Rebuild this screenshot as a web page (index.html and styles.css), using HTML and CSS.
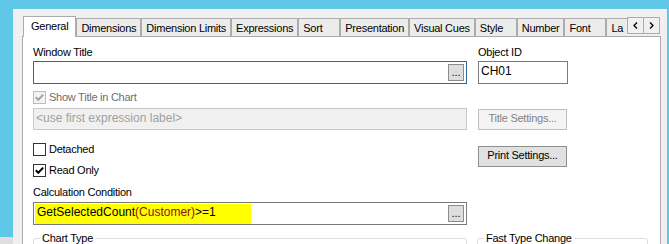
FILE: index.html
```html
<!DOCTYPE html>
<html lang="en">
<head>
    <meta charset="UTF-8">
    <title>Chart Properties</title>
    <link rel="stylesheet" href="styles.css">
</head>
<body>
    <div class="window">
        <div class="dialog">
            <div class="tab-strip">
                <div class="tab-list">
                    <div class="tab tab-active">General</div>
                    <div class="tab">Dimensions</div>
                    <div class="tab">Dimension Limits</div>
                    <div class="tab">Expressions</div>
                    <div class="tab">Sort</div>
                    <div class="tab">Presentation</div>
                    <div class="tab">Visual Cues</div>
                    <div class="tab">Style</div>
                    <div class="tab">Number</div>
                    <div class="tab">Font</div>
                    <div class="tab">La</div>
                </div>
                <div class="tab-scroll">
                    <div class="scroll-btn">
                        <svg width="5" height="7" viewBox="0 0 5 7"><polyline points="4,0.5 1,3.5 4,6.5" fill="none" stroke="#000" stroke-width="1.3"/></svg>
                    </div>
                    <div class="scroll-btn">
                        <svg width="5" height="7" viewBox="0 0 5 7"><polyline points="1,0.5 4,3.5 1,6.5" fill="none" stroke="#000" stroke-width="1.3"/></svg>
                    </div>
                </div>
            </div>

            <div class="panel">
                <div class="row labels">
                    <div class="col-left">Window Title</div>
                    <div>Object ID</div>
                </div>

                <div class="row row-inputs">
                    <div class="col-left field field-focus">
                        <span class="field-text"></span>
                        <span class="browse">...</span>
                    </div>
                    <div class="field field-short"><span class="field-text">CH01</span></div>
                </div>

                <div class="check check-disabled row-show">
                    <span class="box">
                        <svg width="11" height="11" viewBox="0 0 11 11"><polyline points="1.8,5.3 4.3,7.8 9.2,2.6" fill="none" stroke="#a3a3a3" stroke-width="2"/></svg>
                    </span>
                    Show Title in Chart
                </div>

                <div class="row row-title">
                    <div class="col-left field field-disabled"><span class="field-text">&lt;use first expression label&gt;</span></div>
                    <div class="btn btn-disabled">Title Settings...</div>
                </div>

                <div class="row row-options">
                    <div class="col-left checks">
                        <div class="check">
                            <span class="box"></span>
                            Detached
                        </div>
                        <div class="check">
                            <span class="box">
                                <svg width="11" height="11" viewBox="0 0 11 11"><polyline points="1.8,5.3 4.3,7.8 9.2,2.6" fill="none" stroke="#000" stroke-width="2"/></svg>
                            </span>
                            Read Only
                        </div>
                    </div>
                    <div class="btn btn-print">Print Settings...</div>
                </div>

                <div class="caption">Calculation Condition</div>

                <div class="row row-calc">
                    <div class="col-left field">
                        <span class="expr">GetSelectedCount<span class="expr-field">(Customer)</span>&gt;=1</span>
                        <span class="browse">...</span>
                    </div>
                </div>

                <div class="row groups">
                    <fieldset class="col-left group">
                        <legend>Chart Type</legend>
                    </fieldset>
                    <fieldset class="group group-fast">
                        <legend>Fast Type Change</legend>
                    </fieldset>
                </div>
            </div>
        </div>
    </div>
</body>
</html>
```

FILE: styles.css
```css
body {
    margin: 0;
    width: 669px;
    height: 244px;
    overflow: hidden;
    background: linear-gradient(#5fc7e8 237px, #dedede 237px) left / 13px 100% no-repeat, #5fc7e8;
    font-family: "Liberation Sans", Arial, sans-serif;
    font-size: 11px;
    letter-spacing: -0.25px;
    color: #000;
}

.window {
    height: 244px;
    box-sizing: border-box;
    padding: 9px 2px 0 13px;
}

.dialog {
    height: 100%;
    box-sizing: border-box;
    padding: 7px 6px 0 9px;
    background-color: #f0f0f0;
}

/* tab header */
.tab-strip {
    display: flex;
    height: 21px;
    margin-bottom: -1px;
}

.tab-list {
    flex: 1;
    display: flex;
    align-items: flex-end;
    overflow: hidden;
    padding-left: 1px;
}

.tab {
    flex: none;
    height: 18px;
    min-width: 42px;
    box-sizing: border-box;
    margin-bottom: 1px;
    padding: 2px 4px 0;
    line-height: 14px;
    border: 1px solid #acacac;
    border-bottom: none;
    background-color: #ececec;
    white-space: nowrap;
}

.tab-active {
    position: relative;
    z-index: 1;
    height: 21px;
    margin-bottom: 0;
    padding: 2px 7px 0;
    background-color: #fff;
}

.tab-scroll {
    display: flex;
    margin: 1px 1px 0 0;
}

.scroll-btn {
    width: 17px;
    height: 17px;
    box-sizing: border-box;
    border: 1px solid #acacac;
    background-color: #f0f0f0;
    display: flex;
    align-items: center;
    justify-content: center;
}

.scroll-btn + .scroll-btn {
    margin-left: -1px;
}

/* tab page */
.panel {
    height: 230px;
    box-sizing: border-box;
    padding: 9px 0 0 10px;
    border: 1px solid #acacac;
    background-color: #fff;
}

.row {
    display: flex;
    column-gap: 11px;
}

.col-left {
    flex: none;
    width: 434px;
    box-sizing: border-box;
}

.labels {
    height: 13px;
    line-height: 13px;
}

.field {
    height: 23px;
    box-sizing: border-box;
    padding: 1px;
    display: flex;
    justify-content: space-between;
    align-items: flex-start;
    border: 1px solid #7a7a7a;
    background-color: #fff;
    font-size: 12px;
    line-height: 14px;
    letter-spacing: 0;
}

.field-text {
    padding: 1px;
    white-space: nowrap;
}

.field-focus {
    border-color: #33679a;
}

.field-short {
    width: 90px;
}

.field-disabled {
    height: 22px;
    border-color: #c9c9c9;
    background-color: #f0f0f0;
    color: #a0a0a0;
}

.browse {
    width: 16px;
    height: 17px;
    box-sizing: border-box;
    margin: 1px;
    border: 1px solid #8c8c8c;
    background-color: #dedede;
    font-size: 11px;
    line-height: 15px;
    text-align: center;
    color: #000;
}

.row-inputs {
    margin-top: 2px;
}

/* check boxes */
.check {
    display: flex;
    align-items: center;
    gap: 3px;
    height: 13px;
    line-height: 13px;
}

.box {
    width: 13px;
    height: 13px;
    box-sizing: border-box;
    display: flex;
    border: 1px solid #333;
    background-color: #fff;
}

.check-disabled {
    color: #6d6d6d;
}

.check-disabled .box {
    border-color: #bcbcbc;
    background-color: #f3f3f3;
}

.row-show {
    margin-top: 7px;
}

.checks {
    display: flex;
    flex-direction: column;
    gap: 8px;
}

/* buttons */
.btn {
    width: 89px;
    height: 21px;
    box-sizing: border-box;
    border: 1px solid #8f8f8f;
    background-color: #e1e1e1;
    text-align: center;
    line-height: 17px;
}

.btn-disabled {
    margin-top: 1px;
    border-color: #bfbfbf;
    background-color: #f4f4f4;
    color: #838383;
}

.btn-print {
    margin-top: 3px;
}

.row-title {
    margin-top: 4px;
}

.row-options {
    margin-top: 13px;
    align-items: flex-start;
}

.caption {
    margin-top: 9px;
    height: 13px;
    line-height: 13px;
}

.row-calc {
    margin-top: 3px;
}

/* highlighted expression */
.expr {
    display: block;
    width: 216px;
    height: 20px;
    box-sizing: border-box;
    padding-left: 2px;
    line-height: 17px;
    background-color: #ffff00;
    white-space: nowrap;
}

.expr-field {
    color: #8e1010;
}

/* group boxes */
.groups {
    margin-top: 7px;
    column-gap: 10px;
}

.group {
    height: 60px;
    margin: 0;
    padding: 0 6px;
    min-width: 0;
    box-sizing: border-box;
    border: 1px solid #d5dfe5;
    border-radius: 3px;
}

.group legend {
    padding: 0 2px;
    line-height: 13px;
}

.group-fast {
    width: 171px;
}
```
